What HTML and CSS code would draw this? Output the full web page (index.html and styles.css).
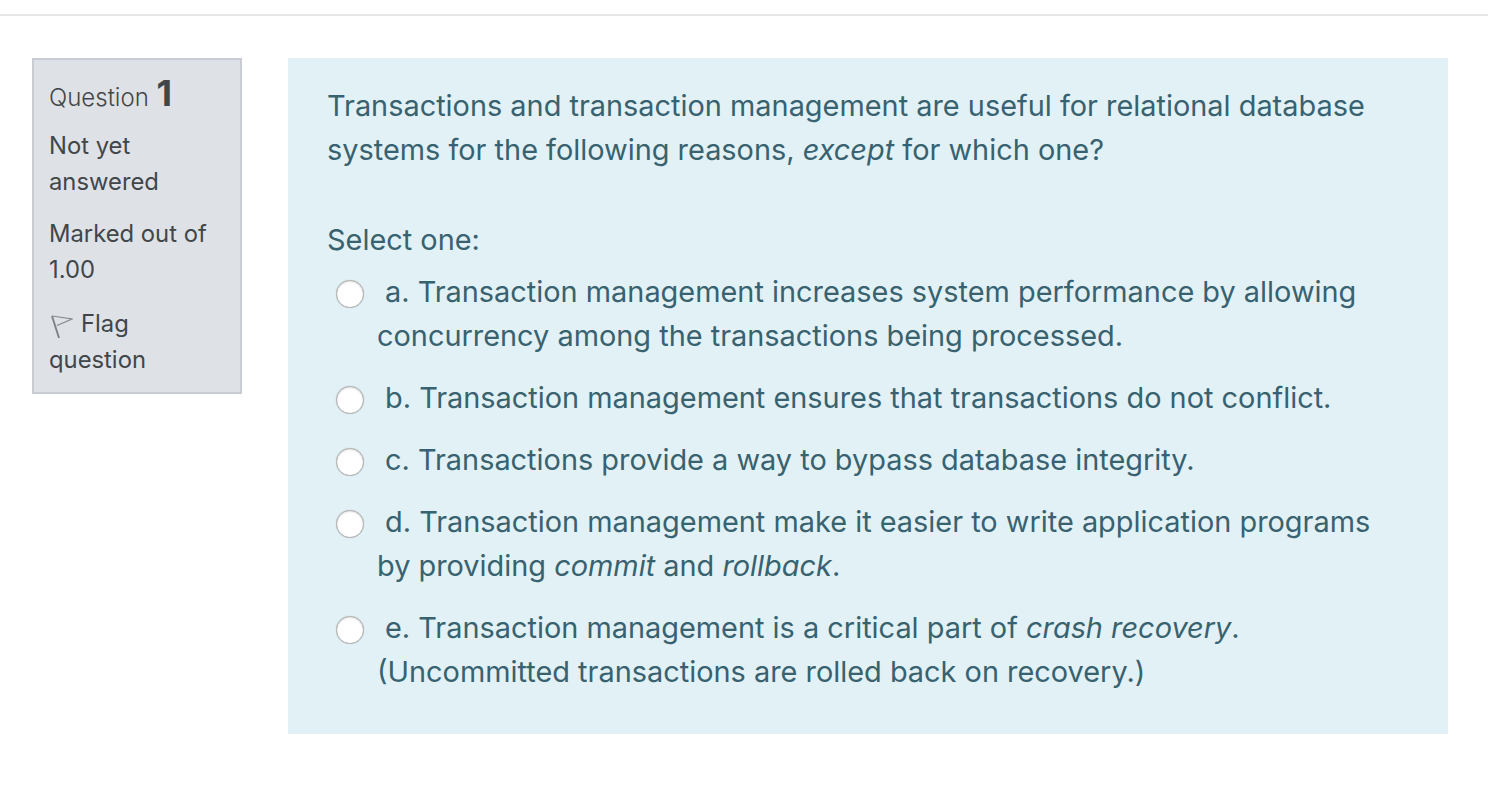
FILE: index.html
```html
<!DOCTYPE html>
<html lang="en">
<head>
<meta charset="utf-8">
<title>Question 1</title>
<link rel="stylesheet" href="styles.css">
</head>
<body>
<div class="topline"></div>
<main class="question">
  <aside class="info">
    <h3 class="qno">Question <span class="num">1</span></h3>
    <div class="state">Not yet answered</div>
    <div class="grade">Marked out of 1.00</div>
    <div class="flag"><svg class="flagicon" width="24" height="24" viewBox="0 0 24 24"><path d="M3 2L10 24" fill="none" stroke="#7d8185" stroke-width="1.9"/><path d="M3 2L23 5L8 11.5" fill="none" stroke="#85898d" stroke-width="1.2"/></svg>Flag question</div>
  </aside>
  <section class="content">
    <p class="qtext">Transactions and transaction management are useful for relational database systems for the following reasons, <em>except</em> for which one?</p>
    <p class="prompt">Select one:</p>
    <div class="answers">
      <div class="ans"><span class="radio"></span><span class="lbl">a. Transaction management increases system performance by allowing concurrency among the transactions being processed.</span></div>
      <div class="ans"><span class="radio"></span><span class="lbl">b. Transaction management ensures that transactions do not conflict.</span></div>
      <div class="ans"><span class="radio"></span><span class="lbl">c. Transactions provide a way to bypass database integrity.</span></div>
      <div class="ans"><span class="radio"></span><span class="lbl">d. Transaction management make it easier to write application programs by providing <em>commit</em> and <em>rollback</em>.</span></div>
      <div class="ans"><span class="radio"></span><span class="lbl">e. Transaction management is a critical part of <em>crash recovery</em>. (Uncommitted transactions are rolled back on recovery.)</span></div>
    </div>
  </section>
</main>
</body>
</html>
```
FILE: styles.css
```css
* { box-sizing: border-box; }
html, body { margin: 0; padding: 0; background: #fff; }
body { font-family: "Inter", "Liberation Sans", sans-serif; color: #373a3c; height: 802px; overflow: hidden; }
.topline { height: 2px; margin-top: 14px; background: #e4e6e8; }
.question { display: flex; align-items: flex-start; gap: 46px; padding: 42px 40px 0 32px; }
.info { width: 210px; height: 336px; flex: none; background: #dee2e6; border: 2px solid #c9cdd3; padding: 13px 15px 0; font-size: 23.8px; line-height: 36px; color: #41464a; }
.qno { margin: 0; font-weight: 300; font-size: 24px; line-height: 40px; height: 40px; }
.num { font-size: 36px; font-weight: 700; margin-left: 1px; }
.state { margin-top: 15px; }
.grade { margin-top: 16px; }
.flag { margin-top: 18px; }
.flagicon { vertical-align: -6px; margin-right: 8px; }
.content { width: 1160px; height: 676px; flex: none; background: #e2f1f6; padding: 26px 40px 0 39px; color: #38626f; font-size: 28.9px; line-height: 44px; }
.qtext { margin: 0; }
.prompt { margin: 46px 0 0; }
.answers { margin-top: 8px; }
.ans { padding-left: 50px; margin-bottom: 18px; }
.radio { display: inline-block; width: 28px; height: 28px; border-radius: 50%; background: #fff; border: 1px solid #b4b4b4; box-shadow: inset 0 1px 2px rgba(0,0,0,0.12), 0 0 1px rgba(0,0,0,0.25); vertical-align: -6px; margin-right: 21px; margin-left: -41px; }
```
